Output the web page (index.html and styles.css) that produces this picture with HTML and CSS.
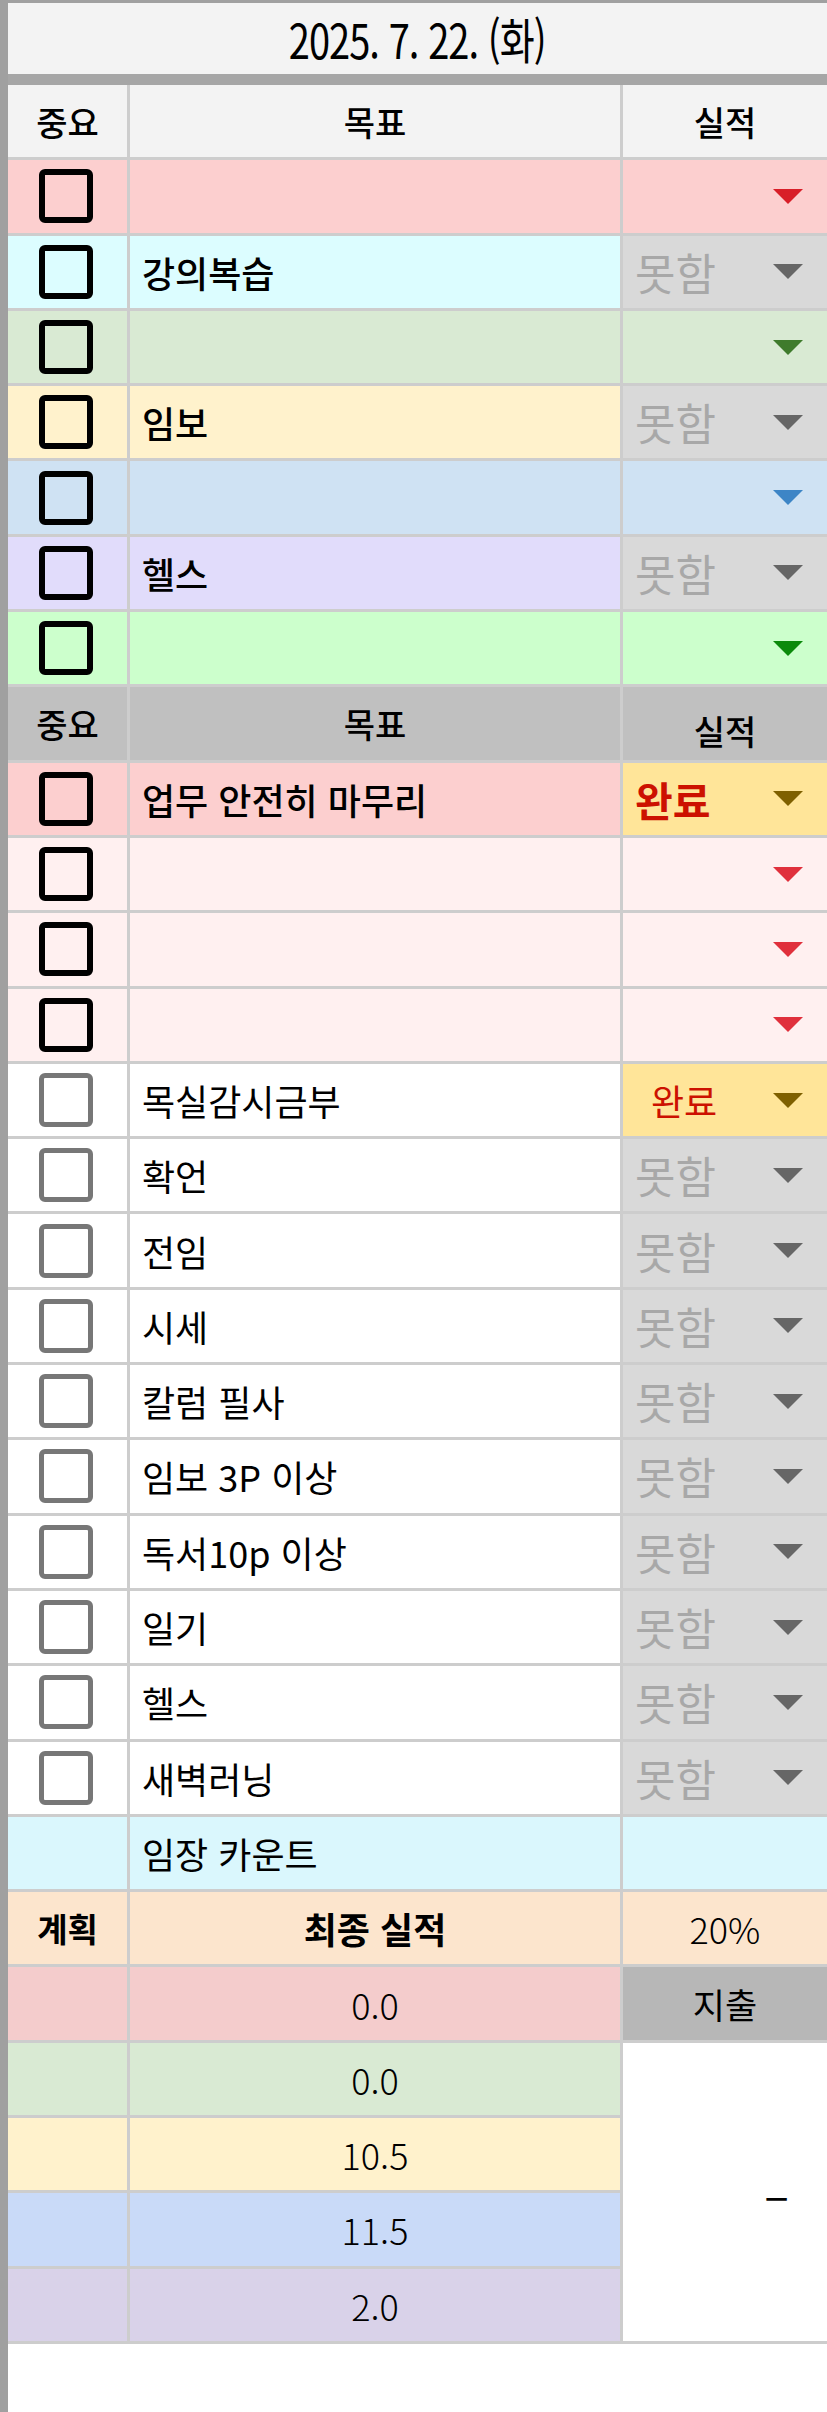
FILE: index.html
```html
<!DOCTYPE html>
<html lang="ko">
<head>
    <meta charset="UTF-8">
    <meta name="viewport" content="width=device-width, initial-scale=1.0">
    <title>2025. 7. 22. 목표</title>
    <link rel="stylesheet" href="styles.css">
</head>
<body>

<div class="page">
    <div class="title"><span>2025. 7. 22. (화)</span></div>

    <div class="sheet">
        <!-- 중요 목표 -->
        <div class="row head">
            <div class="cell">중요</div>
            <div class="cell">목표</div>
            <div class="cell">실적</div>
        </div>
        <div class="row red">
            <div class="cell"><span class="box"></span></div>
            <div class="cell goal"></div>
            <div class="cell pick"><span class="arrow"></span></div>
        </div>
        <div class="row cyan">
            <div class="cell"><span class="box"></span></div>
            <div class="cell goal">강의복습</div>
            <div class="cell pick none">못함<span class="arrow"></span></div>
        </div>
        <div class="row green">
            <div class="cell"><span class="box"></span></div>
            <div class="cell goal"></div>
            <div class="cell pick"><span class="arrow"></span></div>
        </div>
        <div class="row yellow">
            <div class="cell"><span class="box"></span></div>
            <div class="cell goal">임보</div>
            <div class="cell pick none">못함<span class="arrow"></span></div>
        </div>
        <div class="row blue">
            <div class="cell"><span class="box"></span></div>
            <div class="cell goal"></div>
            <div class="cell pick"><span class="arrow"></span></div>
        </div>
        <div class="row lavender">
            <div class="cell"><span class="box"></span></div>
            <div class="cell goal">헬스</div>
            <div class="cell pick none">못함<span class="arrow"></span></div>
        </div>
        <div class="row lime">
            <div class="cell"><span class="box"></span></div>
            <div class="cell goal"></div>
            <div class="cell pick"><span class="arrow"></span></div>
        </div>

        <!-- 업무 / 루틴 -->
        <div class="row head dark">
            <div class="cell">중요</div>
            <div class="cell">목표</div>
            <div class="cell low">실적</div>
        </div>
        <div class="row red">
            <div class="cell"><span class="box"></span></div>
            <div class="cell goal">업무 안전히 마무리</div>
            <div class="cell pick done strong">완료<span class="arrow"></span></div>
        </div>
        <div class="row blush">
            <div class="cell"><span class="box"></span></div>
            <div class="cell goal"></div>
            <div class="cell pick"><span class="arrow"></span></div>
        </div>
        <div class="row blush">
            <div class="cell"><span class="box"></span></div>
            <div class="cell goal"></div>
            <div class="cell pick"><span class="arrow"></span></div>
        </div>
        <div class="row blush">
            <div class="cell"><span class="box"></span></div>
            <div class="cell goal"></div>
            <div class="cell pick"><span class="arrow"></span></div>
        </div>
        <div class="row plain">
            <div class="cell"><span class="box"></span></div>
            <div class="cell goal">목실감시금부</div>
            <div class="cell pick done">완료<span class="arrow"></span></div>
        </div>
        <div class="row plain">
            <div class="cell"><span class="box"></span></div>
            <div class="cell goal">확언</div>
            <div class="cell pick none">못함<span class="arrow"></span></div>
        </div>
        <div class="row plain">
            <div class="cell"><span class="box"></span></div>
            <div class="cell goal">전임</div>
            <div class="cell pick none">못함<span class="arrow"></span></div>
        </div>
        <div class="row plain">
            <div class="cell"><span class="box"></span></div>
            <div class="cell goal">시세</div>
            <div class="cell pick none">못함<span class="arrow"></span></div>
        </div>
        <div class="row plain">
            <div class="cell"><span class="box"></span></div>
            <div class="cell goal">칼럼 필사</div>
            <div class="cell pick none">못함<span class="arrow"></span></div>
        </div>
        <div class="row plain">
            <div class="cell"><span class="box"></span></div>
            <div class="cell goal">임보 3P 이상</div>
            <div class="cell pick none">못함<span class="arrow"></span></div>
        </div>
        <div class="row plain">
            <div class="cell"><span class="box"></span></div>
            <div class="cell goal">독서10p 이상</div>
            <div class="cell pick none">못함<span class="arrow"></span></div>
        </div>
        <div class="row plain">
            <div class="cell"><span class="box"></span></div>
            <div class="cell goal">일기</div>
            <div class="cell pick none">못함<span class="arrow"></span></div>
        </div>
        <div class="row plain">
            <div class="cell"><span class="box"></span></div>
            <div class="cell goal">헬스</div>
            <div class="cell pick none">못함<span class="arrow"></span></div>
        </div>
        <div class="row plain">
            <div class="cell"><span class="box"></span></div>
            <div class="cell goal">새벽러닝</div>
            <div class="cell pick none">못함<span class="arrow"></span></div>
        </div>
        <div class="row sky">
            <div class="cell"></div>
            <div class="cell goal">임장 카운트</div>
            <div class="cell"></div>
        </div>

        <!-- 결산 -->
        <div class="row peach">
            <div class="cell bold">계획</div>
            <div class="cell bold wide">최종 실적</div>
            <div class="cell num">20%</div>
        </div>
        <div class="row rose">
            <div class="cell"></div>
            <div class="cell num">0.0</div>
            <div class="cell spend">지출</div>
        </div>
        <div class="row mint">
            <div class="cell"></div>
            <div class="cell num">0.0</div>
            <div class="cell merged">–</div>
        </div>
        <div class="row cream">
            <div class="cell"></div>
            <div class="cell num">10.5</div>
        </div>
        <div class="row periwinkle">
            <div class="cell"></div>
            <div class="cell num">11.5</div>
        </div>
        <div class="row lilac">
            <div class="cell"></div>
            <div class="cell num">2.0</div>
        </div>
    </div>
</div>

</body>
</html>
```

FILE: styles.css
```css
body {
    margin: 0;
    background-color: #fff;
    color: #000;
    font-family: "Noto Sans CJK KR", "Noto Sans", sans-serif;
}
.page {
    min-height: 2412px;
    border-left: 8px solid #a0a0a0;
    box-sizing: border-box;
}
.title {
    height: 71px;
    border-top: 3px solid #a0a0a0;
    border-bottom: 11px solid #a6a6a6;
    background-color: #f3f3f3;
    display: flex;
    align-items: center;
    justify-content: center;
    font-size: 40px;
    font-weight: 400;
}
.title span {
    display: inline-block;
    transform: scale(0.95, 1.2);
    letter-spacing: -1px;
}

/* grid lines come from the sheet background showing through the gaps */
.sheet {
    display: grid;
    grid-template-columns: 119px 490px 1fr;
    grid-auto-rows: 72.3px;
    gap: 3px;
    padding-bottom: 3px;
    background-color: #cdcdcd;
}
.row {
    display: contents;
}
.cell {
    background-color: var(--bg, #fff);
    display: flex;
    align-items: center;
    justify-content: center;
    overflow: hidden;
    white-space: nowrap;
}

.head .cell {
    font-size: 34px;
    font-weight: 500;
    --bg: #f3f3f3;
}
.head.dark .cell {
    --bg: #c0c0c0;
}
.head .low {
    padding-top: 14px;
    box-sizing: border-box;
}

.red { --bg: #fccfcf; --arrow: #d81e28; }
.cyan { --bg: #dcfdff; }
.green { --bg: #d9ead3; --arrow: #3f7b2c; }
.yellow { --bg: #fff2cc; }
.blue { --bg: #cfe2f3; --arrow: #3d85c6; }
.lavender { --bg: #e1dcfb; }
.lime { --bg: #ccffcc; --arrow: #0b8a0b; }
.blush { --bg: #fff0f0; --arrow: #e0303c; }
.plain { --bg: #fff; }
.sky { --bg: #daf7fd; }
.peach { --bg: #fce5cd; }
.rose { --bg: #f4cccc; }
.mint { --bg: #d9ead3; }
.cream { --bg: #fff2cc; }
.periwinkle { --bg: #c9daf8; }
.lilac { --bg: #d9d2e9; }

.box {
    width: 54px;
    height: 54px;
    border: 6px solid #000;
    border-radius: 6px;
    box-sizing: border-box;
    margin-right: 4px;
}
.plain .box {
    border: 5px solid #777;
}

.goal {
    justify-content: flex-start;
    padding-left: 12px;
    font-size: 36px;
    font-weight: 500;
}
.plain .goal,
.sky .goal {
    font-weight: 400;
}

.pick {
    justify-content: space-between;
    padding: 0 24px 0 12px;
    font-size: 44px;
}
.pick .arrow {
    margin-left: auto;
    width: 0;
    height: 0;
    border-left: 15px solid transparent;
    border-right: 15px solid transparent;
    border-top: 15px solid var(--arrow, #666);
}
.pick.none {
    --bg: #d9d9d9;
    --arrow: #666;
    color: #a8a8a8;
}
.pick.done {
    --bg: #ffe599;
    --arrow: #7f6000;
    color: #cc1100;
    font-size: 36px;
    padding-left: 28px;
}
.pick.done.strong {
    font-size: 41px;
    font-weight: 700;
    padding-left: 12px;
}

.bold {
    font-size: 33px;
    font-weight: 700;
}
.bold.wide {
    font-size: 36px;
}
.num {
    font-size: 36px;
    font-weight: 300;
}
.spend {
    --bg: #b7b7b7;
    font-size: 35px;
    font-weight: 400;
}
.merged {
    grid-row: span 4;
    --bg: #fff;
    justify-content: flex-end;
    padding-right: 38px;
    font-size: 46px;
    font-weight: 400;
}
```
